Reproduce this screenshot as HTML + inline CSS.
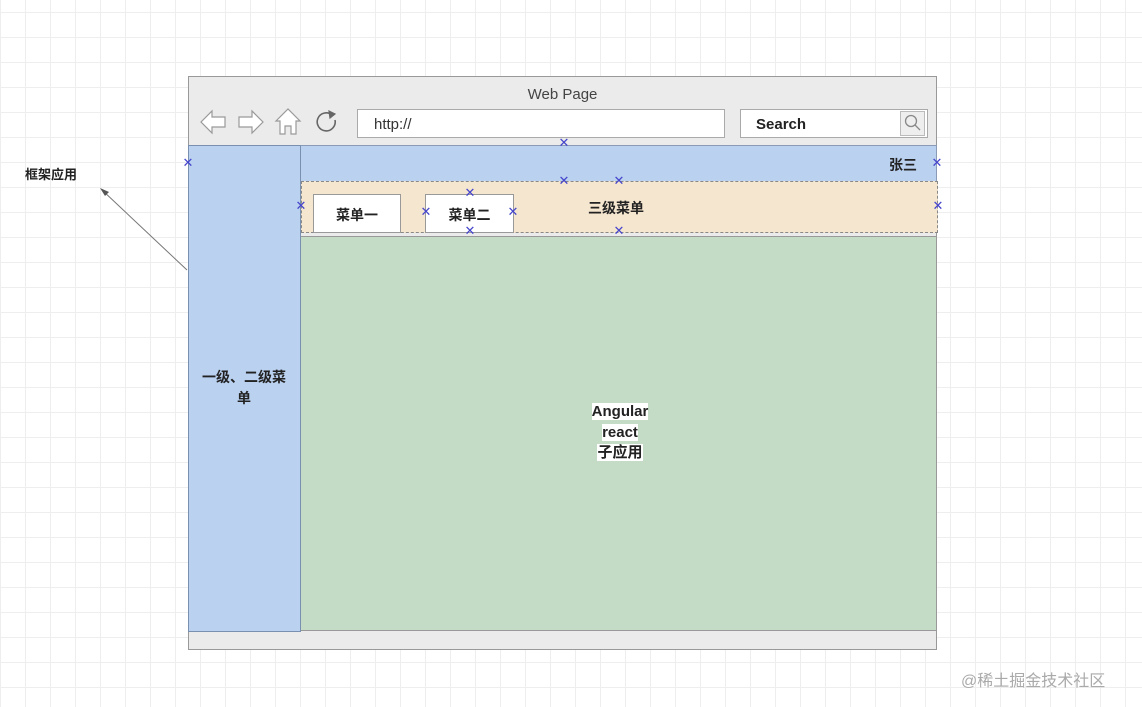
<!DOCTYPE html>
<html><head><meta charset="utf-8"><style>
*{margin:0;padding:0;box-sizing:border-box}
body{width:1142px;height:707px;position:relative;overflow:hidden;background-color:#fff;
background-image:linear-gradient(#eee 1px,transparent 1px),linear-gradient(90deg,#eee 1px,transparent 1px);
background-size:25px 25px;background-position:0 12px,0 0;
font-family:"Liberation Sans","Noto Sans CJK SC",sans-serif;color:#222;font-size:14px}
.a{position:absolute}
.x{position:absolute;width:12px;height:12px;color:#44c;font-size:13px;line-height:12px;text-align:center;font-family:"DejaVu Sans",sans-serif}
</style></head><body>
<div class="a" style="left:188px;top:76px;width:749px;height:574px;background:#ebebeb;border:1px solid #999"></div>
<div class="a" style="left:188px;top:86px;width:749px;text-align:center;font-size:15px;color:#444">Web Page</div>
<svg class="a" style="left:198px;top:106px" width="150" height="32" viewBox="0 0 150 32" fill="#fff" stroke="#999" stroke-width="1.2">
<path d="M3 16 L14 5 L14 11 L27 11 L27 21 L14 21 L14 27 Z"/>
<path d="M65 16 L54 5 L54 11 L41 11 L41 21 L54 21 L54 27 Z"/>
<path d="M78 15 L90 3 L102 15 L98 15 L98 28 L93 28 L93 20 L87 20 L87 28 L82 28 L82 15 Z"/>
<path d="M134 9 A9 9 0 1 0 137 14" fill="none" stroke="#666" stroke-width="1.6"/>
<path d="M131 5 L137 8 L132 12 Z" fill="#666" stroke="#666"/>
</svg>
<div class="a" style="left:357px;top:109px;width:368px;height:29px;background:#fff;border:1px solid #aaa;padding:6px 0 0 16px;font-size:15px;color:#333">http://</div>
<div class="a" style="left:740px;top:109px;width:188px;height:29px;background:#fff;border:1px solid #aaa;padding:6px 0 0 15px;font-size:15px;color:#222;font-weight:bold">Search</div>
<div class="a" style="left:900px;top:111px;width:25px;height:25px;background:#eee;border:1px solid #bbb"></div>
<svg class="a" style="left:903px;top:113px" width="20" height="20" fill="none" stroke="#888" stroke-width="1.3"><circle cx="8" cy="8" r="5.5"/><path d="M12 12 L17 17"/></svg>
<div class="a" style="left:188px;top:145px;width:113px;height:487px;background:#bad1f0;border:1px solid #7a90b0"></div>
<div class="a" style="left:198px;top:367px;width:92px;text-align:center;line-height:21px;font-weight:bold;font-size:14px;word-break:break-all">一级、二级菜单</div>
<div class="a" style="left:301px;top:145px;width:636px;height:37px;background:#bad1f0;border:1px solid #8a9bb8;border-left:none"></div>
<div class="a" style="left:889px;top:155px;font-size:14px;font-weight:bold">张三</div>
<div class="a" style="left:301px;top:181px;width:637px;height:52px;background:#f5e6d0;border:1px dashed #888"></div>
<div class="a" style="left:313px;top:194px;width:88px;height:39px;background:#fff;border:1px solid #999;text-align:center;padding-top:10px;font-weight:bold">菜单一</div>
<div class="a" style="left:425px;top:194px;width:89px;height:39px;background:#fff;border:1px solid #999;text-align:center;padding-top:10px;font-weight:bold">菜单二</div>
<div class="a" style="left:588px;top:198px;font-weight:bold">三级菜单</div>
<div class="a" style="left:301px;top:236px;width:636px;height:395px;background:#c4dcc6;border:1px solid #999;border-left:none"></div>
<div class="a" style="left:560px;top:402px;width:120px;text-align:center;line-height:20.5px;font-size:15px;font-weight:bold">
<span style="background:#fff">Angular</span><br><span style="background:#fff">react</span><br><span style="background:#fff">子应用</span></div>
<div class="a" style="left:25px;top:164px;font-size:13px;font-weight:bold">框架应用</div>
<svg class="a" style="left:95px;top:182px" width="100" height="95"><path d="M92 88 L7 8" stroke="#777" stroke-width="1"/><path d="M5 6 L14 10 L10 14 Z" fill="#555"/></svg>
<div class="x" style="left:182px;top:158px">✕</div>
<div class="x" style="left:558px;top:138px">✕</div>
<div class="x" style="left:931px;top:158px">✕</div>
<div class="x" style="left:558px;top:176px">✕</div>
<div class="x" style="left:613px;top:176px">✕</div>
<div class="x" style="left:295px;top:201px">✕</div>
<div class="x" style="left:932px;top:201px">✕</div>
<div class="x" style="left:464px;top:188px">✕</div>
<div class="x" style="left:420px;top:207px">✕</div>
<div class="x" style="left:507px;top:207px">✕</div>
<div class="x" style="left:464px;top:226px">✕</div>
<div class="x" style="left:613px;top:226px">✕</div>
<div class="a" style="left:961px;top:667px;font-size:16px;color:#aaa">@稀土掘金技术社区</div>
</body></html>
